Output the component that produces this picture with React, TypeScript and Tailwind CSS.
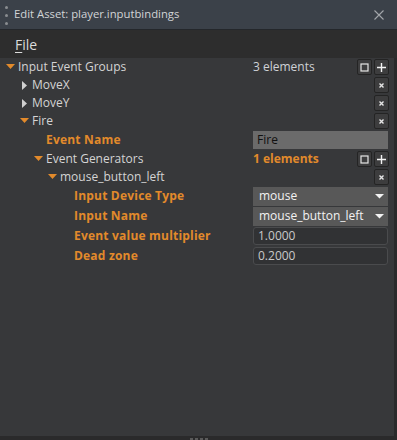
import type { ReactNode } from 'react';

const ORANGE = 'text-[#e28a2b]';

const ArrowDown = () => (
  <svg width="9" height="6" viewBox="0 0 9 6" className="shrink-0">
    <polygon points="0,0 9,0 4.5,5" fill="#e28a2b" />
  </svg>
);

const ArrowRight = () => (
  <svg width="6" height="9" viewBox="0 0 6 9" className="shrink-0">
    <polygon points="0,0 5,4.5 0,9" fill="#cfcfcf" />
  </svg>
);

const SmallButton = ({ children }: { children: ReactNode }) => (
  <div className="w-[15px] h-[16px] flex items-center justify-center bg-[#3d3d3e] border border-[#242424] rounded-[2px]">
    {children}
  </div>
);

const RemoveButton = () => (
  <SmallButton>
    <svg width="7" height="7" viewBox="0 0 7 7">
      <path d="M1.5 1.5 L5.5 5.5 M5.5 1.5 L1.5 5.5" stroke="#e6e6e6" strokeWidth="1.4" />
    </svg>
  </SmallButton>
);

const ContainerButtons = () => (
  <div className="flex gap-[2px]">
    <SmallButton>
      <svg width="9" height="9" viewBox="0 0 9 9">
        <rect x="1" y="1" width="7" height="7" fill="none" stroke="#e6e6e6" strokeWidth="1.2" />
      </svg>
    </SmallButton>
    <SmallButton>
      <svg width="11" height="11" viewBox="0 0 11 11">
        <path d="M5.5 1 V10 M1 5.5 H10" stroke="#f2f2f2" strokeWidth="1.4" />
      </svg>
    </SmallButton>
  </div>
);

const Dropdown = ({ value }: { value: string }) => (
  <div className="h-[19px] w-full bg-[#585858] flex items-center justify-between pl-[6px] pr-[4px] text-[#f2f2f2]">
    <span>{value}</span>
    <svg width="9" height="5" viewBox="0 0 9 5">
      <polygon points="0,0 9,0 4.5,4.5" fill="#f2f2f2" />
    </svg>
  </div>
);

const NumberField = ({ value }: { value: string }) => (
  <div className="h-[18px] w-full bg-[#313234] border border-[#4a4b4d] rounded-[3px] flex items-center pl-[4px] text-[#c9c9c9]">
    {value}
  </div>
);

interface RowProps {
  indent: number;
  height: number;
  arrow?: 'down' | 'right';
  label: string;
  bold?: boolean;
  right?: ReactNode;
}

const Row = ({ indent, height, arrow, label, bold, right }: RowProps) => (
  <div className="flex items-center" style={{ height }}>
    <div className="w-[253px] shrink-0 flex items-center" style={{ paddingLeft: indent }}>
      {arrow === 'down' && <span className="w-[12px] flex"><ArrowDown /></span>}
      {arrow === 'right' && <span className="w-[11px] pl-[1px] flex"><ArrowRight /></span>}
      <span className={bold ? `${ORANGE} font-bold tracking-[0.2px]` : 'text-[#d4d4d4]'}>{label}</span>
    </div>
    <div className="w-[136px] shrink-0 flex items-center">{right}</div>
  </div>
);

export default function App() {
  return (
    <div
      className="w-[397px] h-[440px] bg-[#2a2a2b] flex flex-col text-[12px] overflow-hidden"
      style={{ fontFamily: '"Open Sans", "Noto Sans", sans-serif' }}
    >
      {/* Title bar */}
      <div className="h-[30px] shrink-0 bg-[#3b4149] border-b border-[#24272b] flex items-center relative">
        <div className="w-[13px] flex flex-col items-center gap-[5px] pt-[1px]">
          <span className="w-[3px] h-[3px] bg-[#8a8d91] rounded-full" />
          <span className="w-[3px] h-[3px] bg-[#8a8d91] rounded-full" />
          <span className="w-[3px] h-[3px] bg-[#8a8d91] rounded-full" />
        </div>
        <span className="text-[#d2d4d6] text-[11.3px] pl-[1px]">Edit Asset: player.inputbindings</span>
        <svg width="10" height="10" viewBox="0 0 10 10" className="absolute left-[374px] top-[10px]">
          <path d="M0.5 0.5 L9.5 9.5 M9.5 0.5 L0.5 9.5" stroke="#a4a7ab" strokeWidth="1.1" />
        </svg>
      </div>

      {/* Menu bar */}
      <div className="h-[28px] shrink-0 bg-[#2d2d2d] flex items-center pl-[15px] text-[14px] text-[#dcdcdc]">
        <span>
          <span className="underline underline-offset-2">F</span>ile
        </span>
      </div>

      {/* Property tree */}
      <div className="flex-1 flex">
        <div className="w-[394px] h-[378px] bg-[#37383a] flex flex-col">
          <Row
            indent={6}
            height={18}
            arrow="down"
            label="Input Event Groups"
            right={
              <div className="w-full flex items-center justify-between">
                <span className="text-[#cfd2d6]">3 elements</span>
                <ContainerButtons />
              </div>
            }
          />
          <Row indent={21} height={18} arrow="right" label="MoveX" right={<div className="w-full flex justify-end"><RemoveButton /></div>} />
          <Row indent={21} height={18} arrow="right" label="MoveY" right={<div className="w-full flex justify-end"><RemoveButton /></div>} />
          <Row indent={20} height={18} arrow="down" label="Fire" right={<div className="w-full flex justify-end"><RemoveButton /></div>} />
          <Row
            indent={46}
            height={20}
            label="Event Name"
            bold
            right={
              <div className="h-[18px] w-[135px] bg-[#6b6b6b] flex items-center pl-[4px] text-[#111111]">Fire</div>
            }
          />
          <Row
            indent={34}
            height={18}
            arrow="down"
            label="Event Generators"
            right={
              <div className="w-full flex items-center justify-between">
                <span className={`${ORANGE} font-bold`}>1 elements</span>
                <ContainerButtons />
              </div>
            }
          />
          <Row indent={48} height={18} arrow="down" label="mouse_button_left" right={<div className="w-full flex justify-end"><RemoveButton /></div>} />
          <Row indent={74} height={20} label="Input Device Type" bold right={<div className="w-[135px]"><Dropdown value="mouse" /></div>} />
          <Row indent={74} height={20} label="Input Name" bold right={<div className="w-[135px]"><Dropdown value="mouse_button_left" /></div>} />
          <Row indent={74} height={20} label="Event value multiplier" bold right={<div className="w-[135px]"><NumberField value="1.0000" /></div>} />
          <Row indent={74} height={20} label="Dead zone" bold right={<div className="w-[135px]"><NumberField value="0.2000" /></div>} />
        </div>
      </div>

      {/* Bottom grip */}
      <div className="h-[4px] shrink-0 flex justify-center gap-[2px] items-end">
        <span className="w-[3px] h-[2px] bg-[#5a5a5a]" />
        <span className="w-[3px] h-[2px] bg-[#5a5a5a]" />
        <span className="w-[3px] h-[2px] bg-[#5a5a5a]" />
        <span className="w-[3px] h-[2px] bg-[#5a5a5a]" />
      </div>
    </div>
  );
}
